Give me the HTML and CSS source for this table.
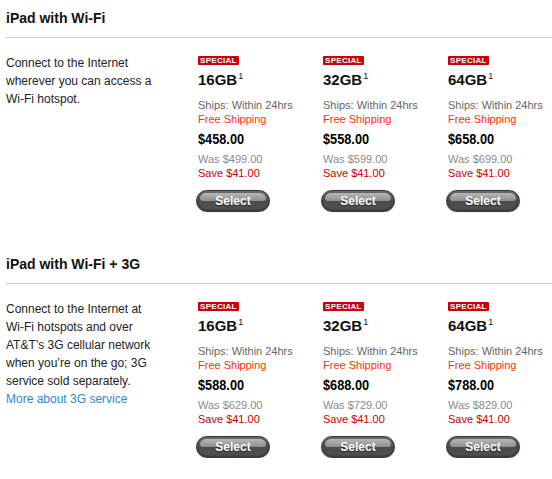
FILE: index.html
```html
<!DOCTYPE html>
<html lang="en">
<head>
<meta charset="utf-8">
<title>iPad</title>
<link rel="stylesheet" href="styles.css">
</head>
<body>
<section class="group">
  <h2 class="group-title">iPad with Wi-Fi</h2>
  <div class="rule"></div>
  <div class="row">
    <p class="desc">Connect to the Internet wherever you can access a Wi-Fi hotspot.</p>
    <div class="product">
      <span class="badge">SPECIAL</span>
      <div class="cap">16GB<sup>1</sup></div>
      <div class="ships">Ships: Within 24hrs</div>
      <div class="free">Free Shipping</div>
      <div class="price">$458.00</div>
      <div class="was">Was $499.00</div>
      <div class="save">Save $41.00</div>
      <a class="btn" href="#"><span>Select</span></a>
    </div>
    <div class="product">
      <span class="badge">SPECIAL</span>
      <div class="cap">32GB<sup>1</sup></div>
      <div class="ships">Ships: Within 24hrs</div>
      <div class="free">Free Shipping</div>
      <div class="price">$558.00</div>
      <div class="was">Was $599.00</div>
      <div class="save">Save $41.00</div>
      <a class="btn" href="#"><span>Select</span></a>
    </div>
    <div class="product">
      <span class="badge">SPECIAL</span>
      <div class="cap">64GB<sup>1</sup></div>
      <div class="ships">Ships: Within 24hrs</div>
      <div class="free">Free Shipping</div>
      <div class="price">$658.00</div>
      <div class="was">Was $699.00</div>
      <div class="save">Save $41.00</div>
      <a class="btn" href="#"><span>Select</span></a>
    </div>
  </div>
</section>
<section class="group">
  <h2 class="group-title">iPad with Wi-Fi + 3G</h2>
  <div class="rule"></div>
  <div class="row">
    <p class="desc">Connect to the Internet at Wi-Fi hotspots and over AT&amp;T’s 3G cellular network when you’re on the go; 3G service sold separately.<br><a class="more" href="#">More about 3G service</a></p>
    <div class="product">
      <span class="badge">SPECIAL</span>
      <div class="cap">16GB<sup>1</sup></div>
      <div class="ships">Ships: Within 24hrs</div>
      <div class="free">Free Shipping</div>
      <div class="price">$588.00</div>
      <div class="was">Was $629.00</div>
      <div class="save">Save $41.00</div>
      <a class="btn" href="#"><span>Select</span></a>
    </div>
    <div class="product">
      <span class="badge">SPECIAL</span>
      <div class="cap">32GB<sup>1</sup></div>
      <div class="ships">Ships: Within 24hrs</div>
      <div class="free">Free Shipping</div>
      <div class="price">$688.00</div>
      <div class="was">Was $729.00</div>
      <div class="save">Save $41.00</div>
      <a class="btn" href="#"><span>Select</span></a>
    </div>
    <div class="product">
      <span class="badge">SPECIAL</span>
      <div class="cap">64GB<sup>1</sup></div>
      <div class="ships">Ships: Within 24hrs</div>
      <div class="free">Free Shipping</div>
      <div class="price">$788.00</div>
      <div class="was">Was $829.00</div>
      <div class="save">Save $41.00</div>
      <a class="btn" href="#"><span>Select</span></a>
    </div>
  </div>
</section>
</body>
</html>
```

FILE: styles.css
```css
html, body {
  background: #fff;
  overflow-x: hidden;
}
body {
  margin: 0;
  padding: 0 0 0 6px;
  font-family: "Liberation Sans", Arial, sans-serif;
  color: #222;
}
.group + .group {
  margin-top: 43px;
}
.group:first-child .group-title {
  padding-top: 9px;
}
.group-title {
  margin: 0;
  font-size: 14px;
  line-height: 18px;
  font-weight: bold;
  color: #111;
}
.rule {
  height: 1px;
  background: #cccccc;
  margin-top: 10px;
}
.row {
  display: flex;
  margin-top: 16px;
}
.desc {
  flex: 0 0 151px;
  margin: 0 41px 0 0;
  font-size: 12px;
  line-height: 18px;
  color: #222;
}
.more {
  color: #2a8ad6;
  text-decoration: none;
}
.product {
  flex: 0 0 125px;
  padding-top: 2px;
  display: flex;
  flex-direction: column;
  align-items: flex-start;
}
.product:last-child {
  flex: 1 1 auto;
}
.badge {
  display: block;
  height: 9px;
  line-height: 9px;
  padding: 0 2px;
  font-size: 8px;
  font-weight: bold;
  letter-spacing: 0.3px;
  color: #fff;
  background: #c8000a;
  border-radius: 1px;
}
.cap {
  margin-top: 6px;
  font-size: 15px;
  line-height: 18px;
  font-weight: bold;
  color: #111;
}
.cap sup {
  font-size: 9px;
  line-height: 11px;
  font-weight: normal;
  vertical-align: top;
  margin-left: 1px;
}
.ships, .free, .was, .save {
  font-size: 11px;
  line-height: 14px;
}
.ships {
  margin-top: 9px;
  color: #666;
}
.free {
  color: #ff3300;
}
.price {
  margin-top: 4px;
  font-size: 15px;
  line-height: 18px;
  font-weight: bold;
  color: #000;
  transform: scaleX(0.85);
  transform-origin: left center;
}
.was {
  margin-top: 4px;
  color: #8a8a8a;
}
.save {
  color: #cc0000;
}
.btn {
  position: relative;
  display: flex;
  align-items: center;
  justify-content: center;
  margin: 10px 0 0 -2px;
  width: 74px;
  height: 22px;
  box-sizing: border-box;
  border: 1px solid #3c3c3c;
  border-radius: 11px;
  background: linear-gradient(#6a6a6a, #4c4c4c 50%, #505050);
  box-shadow: inset 0 -1px 2px rgba(0,0,0,0.35), 0 0 1px rgba(0,0,0,0.4);
  text-decoration: none;
}
.btn::before {
  content: "";
  position: absolute;
  left: 3px;
  right: 3px;
  top: 2px;
  height: 8px;
  border-radius: 7px 7px 3px 3px;
  background: linear-gradient(#b8b8b8, #8e8e8e);
}
.btn span {
  position: relative;
  font-size: 12px;
  font-weight: bold;
  color: #fff;
  text-shadow: 0 1px 1px rgba(0,0,0,0.5);
}
```
